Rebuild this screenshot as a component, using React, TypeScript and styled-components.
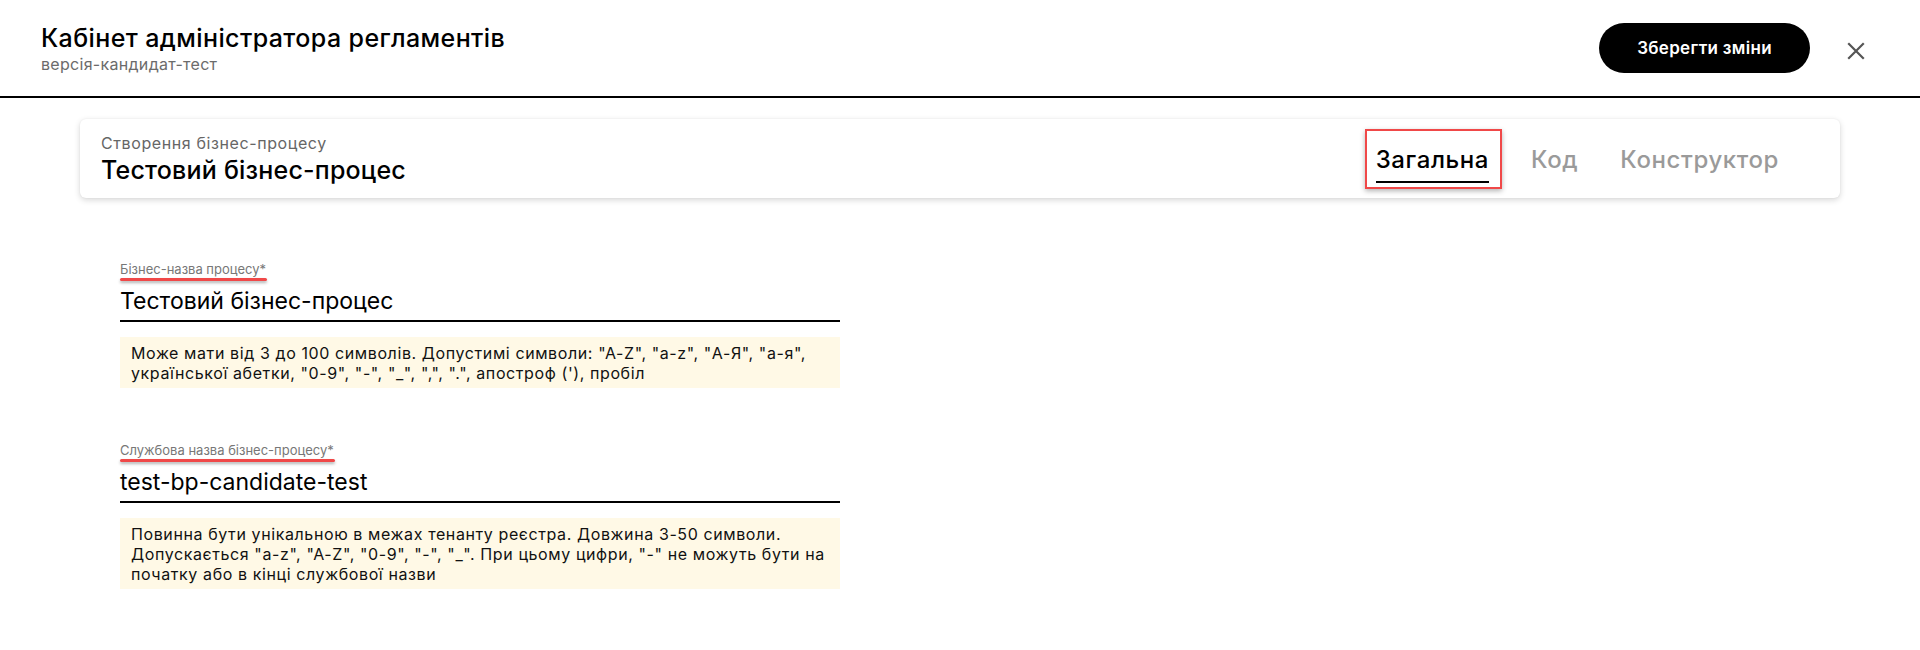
import React from "react";
import styled, { createGlobalStyle } from "styled-components";

const GlobalStyle = createGlobalStyle`
  html, body { margin: 0; padding: 0; background: #fff; }
  body { font-family: Inter, "Noto Sans", Roboto, sans-serif; color: #000; }
  * { box-sizing: border-box; }
`;

const Page = styled.div`
  width: 1920px;
  min-height: 650px;
  background: #fff;
`;

const Header = styled.header`
  height: 98px;
  display: flex;
  align-items: center;
  justify-content: space-between;
  padding: 0 44px 0 41px;
  border-bottom: 2px solid #000;
`;

const TitleBlock = styled.div`
  display: flex;
  flex-direction: column;
  gap: 2px;
`;

const AppTitle = styled.h1`
  margin: 0;
  font-size: 25px;
  line-height: 30px;
  font-weight: 500;
  letter-spacing: 0.4px;
`;

const AppSubtitle = styled.div`
  font-size: 16px;
  line-height: 18px;
  letter-spacing: 0.3px;
  color: #6b6b6b;
`;

const Actions = styled.div`
  display: flex;
  align-items: center;
  gap: 26px;
`;

const SaveButton = styled.button`
  width: 211px;
  height: 50px;
  border: none;
  border-radius: 25px;
  background: #000;
  color: #fff;
  font-family: inherit;
  font-size: 17px;
  font-weight: 600;
  letter-spacing: 0.3px;
  cursor: pointer;
`;

const CloseButton = styled.button`
  width: 40px;
  height: 40px;
  margin-top: 6px;
  display: flex;
  align-items: center;
  justify-content: center;
  border: none;
  background: transparent;
  padding: 0;
  cursor: pointer;
`;

const Main = styled.main`
  padding: 21px 80px 0;
`;

const Card = styled.section`
  height: 79px;
  display: flex;
  justify-content: space-between;
  align-items: stretch;
  padding: 0 40px 0 21px;
  border-radius: 6px;
  background: #fff;
  box-shadow: 0 2px 6px rgba(0, 0, 0, 0.16), 0 0 2px rgba(0, 0, 0, 0.06);
`;

const CardHeading = styled.div`
  display: flex;
  flex-direction: column;
  justify-content: center;
  gap: 4px;
`;

const CardSubtitle = styled.div`
  font-size: 16px;
  line-height: 18px;
  letter-spacing: 0.6px;
  color: #666;
`;

const CardTitle = styled.h2`
  margin: 0;
  font-size: 25px;
  line-height: 28px;
  font-weight: 500;
  letter-spacing: 0.2px;
`;

const Tabs = styled.nav`
  display: flex;
  align-items: flex-end;
  padding-bottom: 15px;
`;

const Tab = styled.button<{ $active?: boolean }>`
  border: none;
  background: transparent;
  padding: 0 21px;
  font-family: inherit;
  font-size: 24px;
  line-height: 26px;
  font-weight: 500;
  letter-spacing: 0.6px;
  color: ${(p) => (p.$active ? "#000" : "#9a9a9a")};
  cursor: pointer;
`;

const TabLabel = styled.span<{ $active?: boolean }>`
  position: relative;
  display: block;
  padding-bottom: 8px;
  border-bottom: 2px solid ${(p) => (p.$active ? "#000" : "transparent")};
`;

const Highlight = styled.span`
  position: absolute;
  top: -18px;
  bottom: -8px;
  left: -11px;
  right: -13px;
  border: 2px solid #f04848;
  box-shadow: 0 2px 5px rgba(0, 0, 0, 0.3);
  pointer-events: none;
`;

const Form = styled.div`
  width: 760px;
  padding: 63px 0 0 40px;
  display: flex;
  flex-direction: column;
  gap: 54px;
`;

const Field = styled.div`
  display: flex;
  flex-direction: column;
`;

const Label = styled.label`
  position: relative;
  align-self: flex-start;
  font-size: 13px;
  line-height: 16px;
  color: #777;
`;

const Marker = styled.span`
  position: absolute;
  left: 0;
  right: -1px;
  bottom: -4px;
  height: 3px;
  border-radius: 2px;
  background: #f04848;
  box-shadow: 0 2px 3px rgba(0, 0, 0, 0.3);
`;

const Value = styled.div`
  margin-top: 10px;
  padding-bottom: 5px;
  font-size: 23px;
  line-height: 28px;
  border-bottom: 2px solid #000;
`;

const Hint = styled.div`
  margin-top: 15px;
  padding: 6px 11px 5px;
  background: #fff9e6;
  font-size: 16px;
  line-height: 20px;
  letter-spacing: 0.6px;
  color: #111;
`;

const CloseIcon = () => (
  <svg width="18" height="18" viewBox="0 0 18 18" fill="none">
    <path d="M2 2 L16 16 M16 2 L2 16" stroke="#555" strokeWidth="2.2" strokeLinecap="square" />
  </svg>
);

export default function App() {
  return (
    <Page>
      <GlobalStyle />
      <Header>
        <TitleBlock>
          <AppTitle>Кабінет адміністратора регламентів</AppTitle>
          <AppSubtitle>версія-кандидат-тест</AppSubtitle>
        </TitleBlock>
        <Actions>
          <SaveButton>Зберегти зміни</SaveButton>
          <CloseButton aria-label="Закрити">
            <CloseIcon />
          </CloseButton>
        </Actions>
      </Header>
      <Main>
        <Card>
          <CardHeading>
            <CardSubtitle>Створення бізнес-процесу</CardSubtitle>
            <CardTitle>Тестовий бізнес-процес</CardTitle>
          </CardHeading>
          <Tabs>
            <Tab $active>
              <TabLabel $active>
                Загальна
                <Highlight />
              </TabLabel>
            </Tab>
            <Tab>
              <TabLabel>Код</TabLabel>
            </Tab>
            <Tab>
              <TabLabel>Конструктор</TabLabel>
            </Tab>
          </Tabs>
        </Card>
        <Form>
          <Field>
            <Label>
              Бізнес-назва процесу*
              <Marker />
            </Label>
            <Value>Тестовий бізнес-процес</Value>
            <Hint>
              Може мати від 3 до 100 символів. Допустимі символи: "А-Z", "a-z", "А-Я", "а-я",
              <br />
              української абетки, "0-9", "-", "_", ",", ".", апостроф ('), пробіл
            </Hint>
          </Field>
          <Field>
            <Label>
              Службова назва бізнес-процесу*
              <Marker />
            </Label>
            <Value>test-bp-candidate-test</Value>
            <Hint>
              Повинна бути унікальною в межах тенанту реєстра. Довжина 3-50 символи.
              <br />
              Допускається "a-z", "A-Z", "0-9", "-", "_". При цьому цифри, "-" не можуть бути на
              <br />
              початку або в кінці службової назви
            </Hint>
          </Field>
        </Form>
      </Main>
    </Page>
  );
}
